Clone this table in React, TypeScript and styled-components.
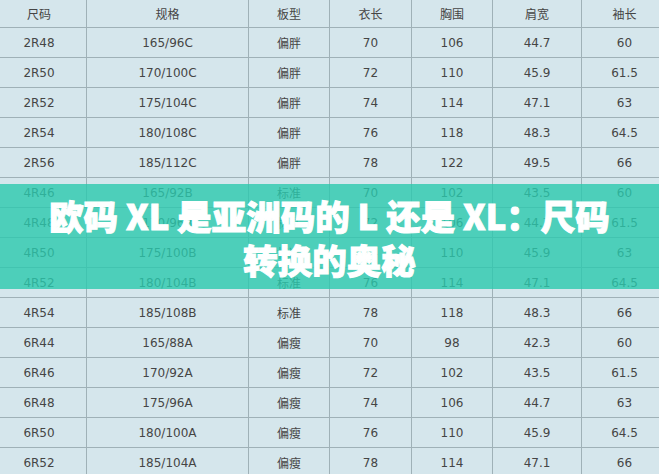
import React from 'react'
import styled, { createGlobalStyle } from 'styled-components'

const GlobalStyle = createGlobalStyle`
  html, body {
    margin: 0;
    padding: 0;
    background: #d5e6ec;
    overflow: hidden;
  }
`

const columns = [
  { label: '尺码', width: 95 },
  { label: '规格', width: 162 },
  { label: '板型', width: 81 },
  { label: '衣长', width: 82 },
  { label: '胸围', width: 81 },
  { label: '肩宽', width: 89 },
  { label: '袖长', width: 86 },
]

const rows = [
  ['2R48', '165/96C', '偏胖', '70', '106', '44.7', '60'],
  ['2R50', '170/100C', '偏胖', '72', '110', '45.9', '61.5'],
  ['2R52', '175/104C', '偏胖', '74', '114', '47.1', '63'],
  ['2R54', '180/108C', '偏胖', '76', '118', '48.3', '64.5'],
  ['2R56', '185/112C', '偏胖', '78', '122', '49.5', '66'],
  ['4R46', '165/92B', '标准', '70', '102', '43.5', '60'],
  ['4R48', '170/96B', '标准', '72', '106', '44.7', '61.5'],
  ['4R50', '175/100B', '标准', '74', '110', '45.9', '63'],
  ['4R52', '180/104B', '标准', '76', '114', '47.1', '64.5'],
  ['4R54', '185/108B', '标准', '78', '118', '48.3', '66'],
  ['6R44', '165/88A', '偏瘦', '70', '98', '42.3', '60'],
  ['6R46', '170/92A', '偏瘦', '72', '102', '43.5', '61.5'],
  ['6R48', '175/96A', '偏瘦', '74', '106', '44.7', '63'],
  ['6R50', '180/100A', '偏瘦', '76', '110', '45.9', '64.5'],
  ['6R52', '185/104A', '偏瘦', '78', '114', '47.1', '66'],
]

const template = columns.map((c) => `${c.width}px`).join(' ')

const App = () => {
  return (
    <Page>
      <GlobalStyle />
      <Table>
        <Row $height={28}>
          {columns.map((c) => (
            <Cell key={c.label}>{c.label}</Cell>
          ))}
        </Row>
        {rows.map((r) => (
          <Row key={r[0]} $height={30}>
            {r.map((v, i) => (
              <Cell key={i}>{v}</Cell>
            ))}
          </Row>
        ))}
      </Table>
      <Banner>
        <Title>
          欧码 XL 是亚洲码的 L 还是 XL：尺码
          <br />
          转换的奥秘
        </Title>
      </Banner>
    </Page>
  )
}

export default App

const Page = styled.div`
  position: relative;
  width: 659px;
  height: 474px;
  overflow: hidden;
  background: #d5e6ec;
`

const Table = styled.div`
  display: flex;
  flex-direction: column;
  margin-left: -8px;
  width: ${columns.reduce((s, c) => s + c.width, 0)}px;
`

const Row = styled.div<{ $height: number }>`
  display: grid;
  grid-template-columns: ${template};
  height: ${(p) => p.$height}px;
  box-sizing: border-box;
  border-bottom: 1px solid #9fb1b7;
`

const Cell = styled.div`
  display: flex;
  align-items: center;
  justify-content: center;
  border-right: 1px solid #9fb1b7;
  font-family: "DejaVu Sans", "Noto Sans CJK SC", sans-serif;
  font-size: 12px;
  color: #454545;
`

const Banner = styled.div`
  position: absolute;
  left: 0;
  right: 0;
  top: 184px;
  height: 105px;
  display: flex;
  align-items: center;
  justify-content: center;
  background: rgba(42, 201, 174, 0.8);
`

const Title = styled.div`
  font-family: "Noto Sans CJK SC", "Noto Sans", sans-serif;
  font-weight: 900;
  font-size: 34.5px;
  line-height: 44px;
  color: #ffffff;
  -webkit-text-stroke: 1px #ffffff;
  text-align: center;
`
